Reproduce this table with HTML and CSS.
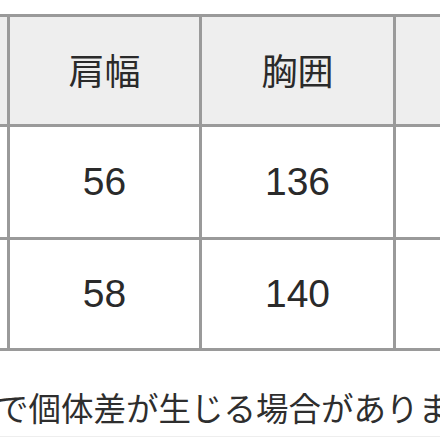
FILE: index.html
```html
<!DOCTYPE html>
<html lang="ja">
<head>
<meta charset="utf-8">
<link rel="stylesheet" href="styles.css">
</head>
<body>
<div class="page">
  <div class="size-table">
    <div class="cell head edge"></div>
    <div class="cell head">肩幅</div>
    <div class="cell head">胸囲</div>
    <div class="cell head"></div>

    <div class="cell row-a edge"></div>
    <div class="cell num row-a">56</div>
    <div class="cell num row-a">136</div>
    <div class="cell row-a"></div>

    <div class="cell row-b edge"></div>
    <div class="cell num row-b">58</div>
    <div class="cell num row-b">140</div>
    <div class="cell row-b"></div>
  </div>
  <p class="note">で個体差が生じる場合がありま</p>
</div>
</body>
</html>
```
FILE: styles.css
```css
html, body {
  margin: 0;
  padding: 0;
  background: #ffffff;
  overflow: hidden;
}
.page {
  width: 440px;
  height: 440px;
  overflow: hidden;
  position: relative;
  font-family: "Liberation Sans", "Noto Sans CJK JP", sans-serif;
  color: #2b2b2b;
}
.size-table {
  display: grid;
  grid-template-columns: 100px 192px 194px 150px;
  grid-template-rows: 110px 113px 111px;
  margin-left: -90px;
  margin-top: 14px;
  border-top: 3px solid #9a9a9a;
  width: max-content;
}
.cell {
  box-sizing: border-box;
  border-right: 3px solid #9a9a9a;
  border-bottom: 3px solid #9a9a9a;
  display: flex;
  align-items: center;
  justify-content: center;
  background: #ffffff;
}
.head {
  background: #eeeeee;
  font-family: "Noto Sans CJK JP", sans-serif;
  font-size: 36px;
  line-height: 1;
  padding-bottom: 4px;
  color: #2a2a2a;
}
.num {
  font-size: 39px;
  color: #2a2a2a;
}
.note {
  margin: 40px 0 0 -4px;
  font-family: "Noto Sans CJK JP", sans-serif;
  font-size: 32.5px;
  line-height: 1;
  white-space: nowrap;
  color: #2e2e2e;
  padding-bottom: 12px;
  border-bottom: 1px solid #eeeeee;
}
```
